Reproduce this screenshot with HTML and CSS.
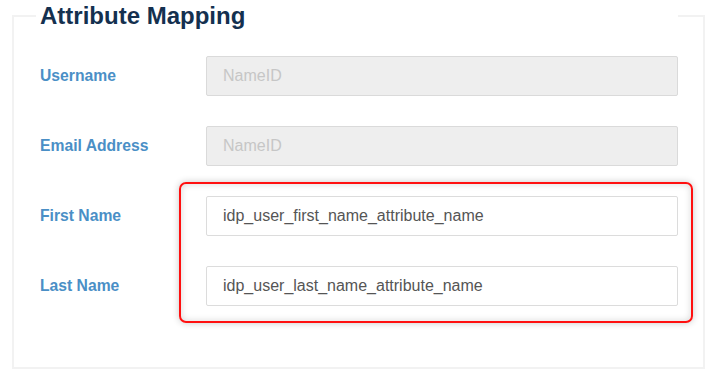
FILE: index.html
```html
<!DOCTYPE html>
<html lang="en">
<head>
<meta charset="utf-8">
<title>Attribute Mapping</title>
<link rel="stylesheet" href="styles.css">
</head>
<body>
<fieldset class="panel">
  <legend class="panel-title">Attribute Mapping</legend>
  <div class="rows">
    <div class="row">
      <label class="row-label">Username</label>
      <input class="field" type="text" placeholder="NameID" disabled>
    </div>
    <div class="row">
      <label class="row-label">Email Address</label>
      <input class="field" type="text" placeholder="NameID" disabled>
    </div>
    <div class="group">
      <div class="row">
        <label class="row-label">First Name</label>
        <input class="field" type="text" value="idp_user_first_name_attribute_name">
      </div>
      <div class="row">
        <label class="row-label">Last Name</label>
        <input class="field" type="text" value="idp_user_last_name_attribute_name">
      </div>
      <div class="highlight"></div>
    </div>
  </div>
</fieldset>
</body>
</html>
```
FILE: styles.css
```css
html, body {
  margin: 0;
  padding: 0;
  background: #ffffff;
}

body {
  font-family: "Liberation Sans", Arial, sans-serif;
  width: 727px;
  height: 377px;
  overflow: hidden;
}

.panel {
  margin: 2px 22px 0 12px;
  padding: 26px 25px 61px 22px;
  border: 2px solid #f2f2f2;
  min-width: 0;
}

.panel-title {
  box-sizing: border-box;
  width: 100%;
  padding: 0 0 0 4px;
  font-size: 24px;
  font-weight: bold;
  color: #14304f;
  line-height: normal;
  background: #fff;
}

.rows {
  display: flex;
  flex-direction: column;
  gap: 30px;
}

.group {
  position: relative;
  display: flex;
  flex-direction: column;
  gap: 30px;
}

.row {
  display: flex;
  align-items: center;
}

.row-label {
  flex: 0 0 170px;
  box-sizing: border-box;
  padding-left: 4px;
  font-size: 15.7px;
  font-weight: bold;
  color: #4a8fc6;
}

.field {
  flex: 1 1 auto;
  min-width: 0;
  box-sizing: border-box;
  height: 40px;
  margin: 0;
  padding: 0 16px;
  border: 1px solid #dcdcdc;
  border-radius: 2px;
  background: #fff;
  font-family: "Liberation Sans", Arial, sans-serif;
  font-size: 16px;
  color: #555;
  outline: none;
}

.field:disabled {
  background: #eeeeee;
  border-color: #dadada;
}

.field::placeholder {
  color: #c6c6c6;
  opacity: 1;
}

.highlight {
  position: absolute;
  top: -14px;
  left: 143px;
  right: -15px;
  bottom: -17px;
  border: 2px solid #ff1010;
  border-radius: 7px;
  box-shadow: 0 0 7px rgba(0, 0, 0, 0.22), inset 0 0 7px rgba(0, 0, 0, 0.16);
  pointer-events: none;
}
```
